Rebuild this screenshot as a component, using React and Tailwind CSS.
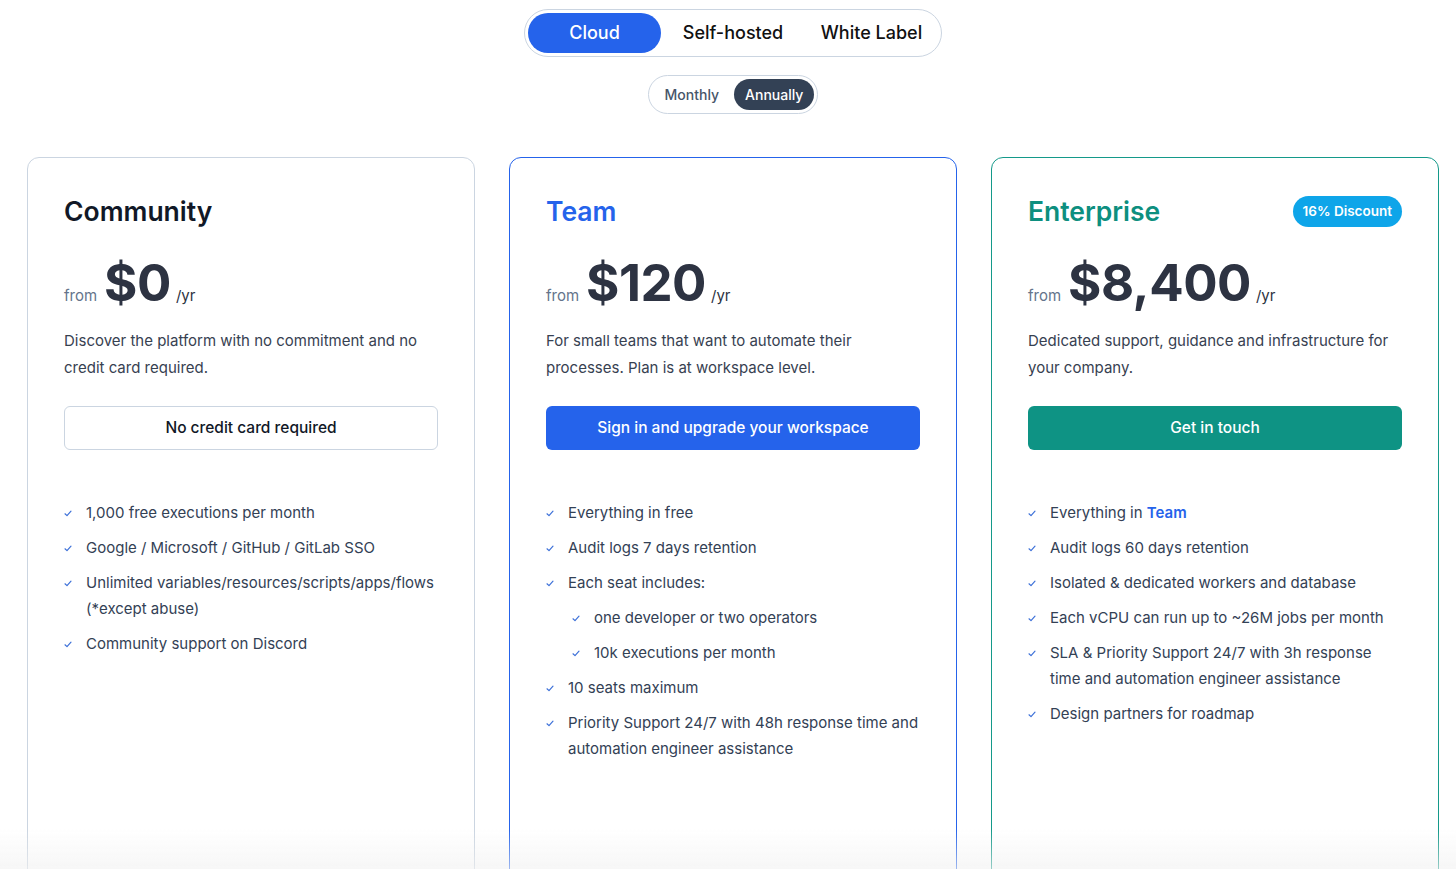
import React, { useState } from 'react';

const plans = [
  {
    name: 'Community',
    titleClass: 'text-[#111827]',
    borderClass: 'border-[#cbd5e1]',
    price: '$0',
    desc: 'Discover the platform with no commitment and no credit card required.',
    cta: 'No credit card required',
    ctaClass: 'bg-white border border-[#cbd5e1] text-[#111827]',
    features: [
      { text: '1,000 free executions per month' },
      { text: 'Google / Microsoft / GitHub / GitLab SSO' },
      { text: 'Unlimited variables/resources/scripts/apps/flows (*except abuse)' },
      { text: 'Community support on Discord' },
    ],
  },
  {
    name: 'Team',
    titleClass: 'text-[#2563eb]',
    borderClass: 'border-[#2563eb]',
    price: '$120',
    desc: 'For small teams that want to automate their processes. Plan is at workspace level.',
    cta: 'Sign in and upgrade your workspace',
    ctaClass: 'bg-[#2563eb] text-white',
    features: [
      { text: 'Everything in free' },
      { text: 'Audit logs 7 days retention' },
      { text: 'Each seat includes:' },
      { text: 'one developer or two operators', sub: true },
      { text: '10k executions per month', sub: true },
      { text: '10 seats maximum' },
      { text: 'Priority Support 24/7 with 48h response time and automation engineer assistance' },
    ],
  },
  {
    name: 'Enterprise',
    titleClass: 'text-[#0d8f7f]',
    borderClass: 'border-[#14998a]',
    price: '$8,400',
    badge: '16% Discount',
    desc: 'Dedicated support, guidance and infrastructure for your company.',
    cta: 'Get in touch',
    ctaClass: 'bg-[#0e9384] text-white',
    features: [
      { text: 'Everything in ', strong: 'Team' },
      { text: 'Audit logs 60 days retention' },
      { text: 'Isolated & dedicated workers and database' },
      { text: 'Each vCPU can run up to ~26M jobs per month' },
      { text: 'SLA & Priority Support 24/7 with 3h response time and automation engineer assistance' },
      { text: 'Design partners for roadmap' },
    ],
  },
];

function CheckMark() {
  return (
    <svg width="8" height="7" viewBox="0 0 8 7" fill="none" className="mt-[10px] flex-shrink-0">
      <path d="M1 3.8 L3 5.6 L7 1.2" stroke="#3b6fd8" strokeWidth="1.2" strokeLinecap="round" strokeLinejoin="round" />
    </svg>
  );
}

function PlanCard({ plan }) {
  return (
    <div className={`h-[760px] rounded-xl border bg-white px-9 pt-9 ${plan.borderClass}`}>
      {/* Title row */}
      <div className="flex items-center justify-between">
        <h2 className={`text-[26.5px] leading-[34px] font-semibold ${plan.titleClass}`}>{plan.name}</h2>
        {plan.badge && (
          <span className="inline-flex items-center h-[31px] px-[10px] rounded-full bg-[#0ea5e9] text-white text-[13.5px] font-semibold">
            {plan.badge}
          </span>
        )}
      </div>

      {/* Price */}
      <div className="flex items-baseline gap-[7px] mt-[29px]">
        <span className="text-[15px] text-[#64748b]">from</span>
        <span className="text-[51px] leading-none font-bold text-[#2d3342] tracking-[-0.5px]">{plan.price}</span>
        <span className="text-[15px] text-[#2d3342] -ml-[2px]">/yr</span>
      </div>

      <p className="mt-[20px] text-[15px] leading-[26.5px] text-[#374151]">{plan.desc}</p>

      <button
        className={`mt-[25px] w-full h-11 rounded-md text-[15.5px] font-medium ${plan.ctaClass}`}
      >
        {plan.cta}
      </button>

      <ul className="mt-[50px] flex flex-col gap-[9px]">
        {plan.features.map((f, i) => (
          <li key={i} className={`flex gap-[14px] text-[15px] leading-[26px] text-[#334155] ${f.sub ? 'pl-[26px]' : ''}`}>
            <CheckMark />
            <span>
              {f.text}
              {f.strong && <span className="font-semibold text-[#2563eb]">{f.strong}</span>}
            </span>
          </li>
        ))}
      </ul>
    </div>
  );
}

const modes = [
  { label: 'Cloud', w: 'w-[133px]' },
  { label: 'Self-hosted', w: 'w-[144px]' },
  { label: 'White Label', w: 'w-[133px]' },
];

export default function App() {
  const [mode, setMode] = useState('Cloud');
  const [period, setPeriod] = useState('Annually');

  return (
    <div className="relative min-h-screen bg-white font-['Inter',sans-serif] overflow-hidden">
      {/* Hosting toggle */}
      <div className="pt-[9px] flex justify-center">
        <div className="ml-[10px] flex items-center h-[48px] p-[3px] rounded-full border border-[#cbd5e1] bg-white">
          {modes.map((m) => (
            <button
              key={m.label}
              onClick={() => setMode(m.label)}
              className={`h-[40px] rounded-full text-lg font-medium ${m.w} ${
                mode === m.label ? 'bg-[#2563eb] text-white' : 'text-[#111111]'
              }`}
            >
              {m.label}
            </button>
          ))}
        </div>
      </div>

      {/* Billing period toggle */}
      <div className="mt-[18px] flex justify-center">
        <div className="ml-[10px] flex items-center h-[39px] px-[3px] rounded-full border border-[#cbd5e1] bg-white">
          {['Monthly', 'Annually'].map((p) => (
            <button
              key={p}
              onClick={() => setPeriod(p)}
              className={`h-[31px] rounded-full text-sm font-medium ${
                period === p ? 'bg-[#334155] text-white px-[11px] ml-[2px]' : 'text-[#475569] px-[13px]'
              }`}
            >
              {p}
            </button>
          ))}
        </div>
      </div>

      {/* Plans */}
      <div className="mt-[43px] ml-[27px] grid grid-cols-[448px_448px_448px] gap-[34px]">
        {plans.map((plan) => (
          <PlanCard key={plan.name} plan={plan} />
        ))}
      </div>

      {/* bottom fade */}
      <div className="pointer-events-none fixed left-0 right-0 top-[829px] h-[40px] bg-gradient-to-b from-transparent to-[#f1f1f1]/60" />
    </div>
  );
}
